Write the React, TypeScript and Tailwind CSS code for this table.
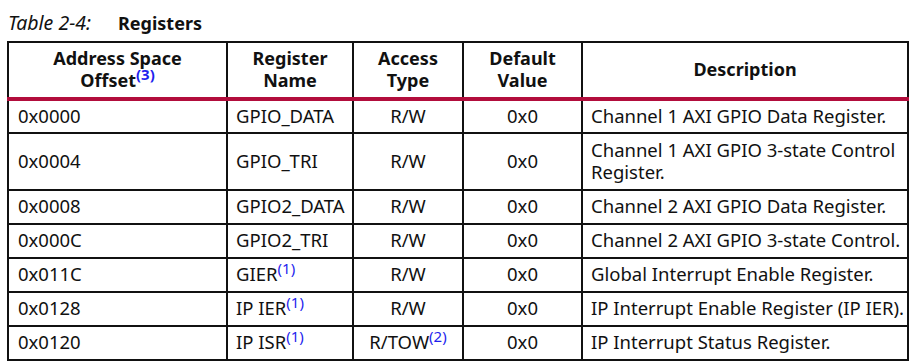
import React from 'react';

type Row = {
  offset: string;
  name: string;
  nameSup?: string;
  access: string;
  accessSup?: string;
  value: string;
  desc: React.ReactNode;
  tall?: boolean;
};

const rows: Row[] = [
  { offset: '0x0000', name: 'GPIO_DATA', access: 'R/W', value: '0x0', desc: 'Channel 1 AXI GPIO Data Register.' },
  {
    offset: '0x0004',
    name: 'GPIO_TRI',
    access: 'R/W',
    value: '0x0',
    desc: (
      <>
        Channel 1 AXI GPIO 3-state Control
        <br />
        Register.
      </>
    ),
    tall: true,
  },
  { offset: '0x0008', name: 'GPIO2_DATA', access: 'R/W', value: '0x0', desc: 'Channel 2 AXI GPIO Data Register.' },
  { offset: '0x000C', name: 'GPIO2_TRI', access: 'R/W', value: '0x0', desc: 'Channel 2 AXI GPIO 3-state Control.' },
  { offset: '0x011C', name: 'GIER', nameSup: '(1)', access: 'R/W', value: '0x0', desc: 'Global Interrupt Enable Register.' },
  { offset: '0x0128', name: 'IP IER', nameSup: '(1)', access: 'R/W', value: '0x0', desc: 'IP Interrupt Enable Register (IP IER).' },
  { offset: '0x0120', name: 'IP ISR', nameSup: '(1)', access: 'R/TOW', accessSup: '(2)', value: '0x0', desc: 'IP Interrupt Status Register.' },
];

const Sup: React.FC<{ children: React.ReactNode; bold?: boolean }> = ({ children, bold }) => (
  <sup className={`text-[15px] leading-none text-[#1f1fee] top-[-0.45em] ${bold ? 'font-bold' : 'font-normal'}`}>{children}</sup>
);

const cell = 'border-2 border-[#111] px-[8px] align-middle';
const head = `${cell} border-b-[4px] border-b-[#b20d3c] pb-[3px]`;

export default function App() {
  return (
    <div className="w-[914px] h-[364px] bg-white text-[#111] font-['Noto_Sans',sans-serif] overflow-hidden">
      <div className="flex items-baseline pl-[8px] pt-[8px] h-[41px]">
        <span className="italic text-[19.5px] w-[110px]">Table 2-4:</span>
        <span className="font-bold text-[18px]">Registers</span>
      </div>
      <table className="ml-[7px] w-[900px] table-fixed border-collapse text-[18.5px] leading-[22px]">
        <colgroup>
          <col className="w-[219px]" />
          <col className="w-[126px]" />
          <col className="w-[110px]" />
          <col className="w-[119px]" />
          <col className="w-[326px]" />
        </colgroup>
        <thead>
          <tr className="h-[57px] font-bold text-center text-[18px]">
            <th className={head}>
              Address Space
              <br />
              Offset<Sup bold>(3)</Sup>
            </th>
            <th className={head}>
              Register
              <br />
              Name
            </th>
            <th className={head}>
              Access
              <br />
              Type
            </th>
            <th className={head}>
              Default
              <br />
              Value
            </th>
            <th className={head}>Description</th>
          </tr>
        </thead>
        <tbody>
          {rows.map((r) => (
            <tr key={r.offset} className={r.tall ? 'h-[57px]' : 'h-[34px]'}>
              <td className={`${cell} pl-[9px] pb-[2px]`}>{r.offset}</td>
              <td className={`${cell} pb-[2px]`}>
                {r.name}
                {r.nameSup && <Sup>{r.nameSup}</Sup>}
              </td>
              <td className={`${cell} text-center pb-[2px]`}>
                {r.access}
                {r.accessSup && <Sup>{r.accessSup}</Sup>}
              </td>
              <td className={`${cell} text-center pb-[2px]`}>{r.value}</td>
              <td className={`${cell} whitespace-nowrap pb-[2px]`}>{r.desc}</td>
            </tr>
          ))}
        </tbody>
      </table>
    </div>
  );
}
